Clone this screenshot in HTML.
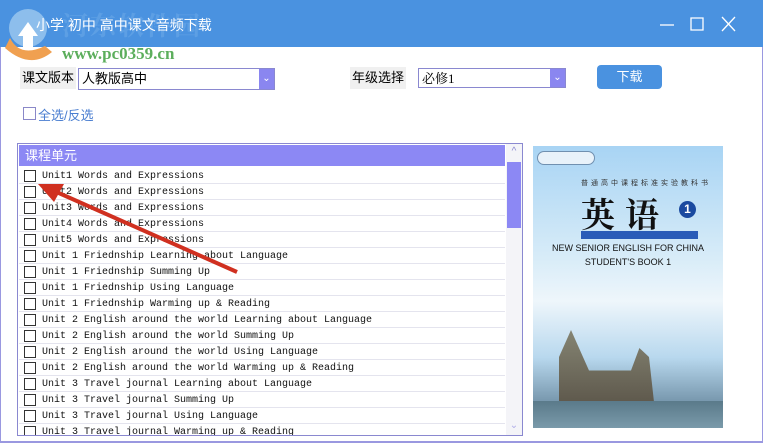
<!DOCTYPE html>
<html><head><meta charset="utf-8"><style>
*{margin:0;padding:0;box-sizing:border-box}
body{width:763px;height:443px;overflow:hidden;background:#fff;position:relative;font-family:"Liberation Sans","Noto Sans CJK SC",sans-serif}
.tb{position:absolute;left:0;top:0;width:763px;height:47px;background:#4a92e0}
.win{position:absolute;left:0;top:47px;width:763px;height:396px;border:1px solid #9a98e0;border-top:none;border-bottom:2px solid #9a98e0}
.abs{position:absolute}
.lbl{background:#f0f0f0;font-size:13px;color:#000;line-height:22px;padding:0 2px}
.sel{border:1px solid #8a88d0;background:#fff;font-size:13px;line-height:20px;padding-left:3px}
.sel .ar{position:absolute;right:0;top:0;width:15px;height:20px;background:#8a86f0;color:#fff;font-size:10px;text-align:center;line-height:20px}
.row{position:absolute;left:0;height:16px;width:486px;border-bottom:1px solid #e4e4ee;font-family:"Liberation Mono",monospace;font-size:10px;line-height:17px;white-space:pre;color:#111}
.row i{position:absolute;left:5px;top:2px;width:12px;height:12px;border:1px solid #333;background:#fff}
.row span{position:absolute;left:23px;top:0}
</style></head><body>
<div class="tb"></div>
<svg class="abs" style="left:0;top:8px" width="60" height="55"><circle cx="28" cy="20" r="19" fill="#9ec9ef" opacity=".8"/><path d="M10 30 Q20 50 45 38 L52 44 Q30 62 5 40Z" fill="#f0a050"/><path d="M18 28 L28 14 L38 28 L33 28 L33 40 L23 40 L23 28Z" fill="#fff"/></svg>
<div class="abs" style="left:62px;top:6px;font-size:26px;color:#6aa8e8;opacity:.6;font-weight:bold;font-family:'Noto Serif CJK SC',serif;letter-spacing:2px">河东软件园</div>
<div class="abs" style="left:36px;top:15px;font-size:14px;color:#fff">小学 初中 高中课文音频下载</div>
<div class="abs" style="left:62px;top:44px;font-size:17px;color:#5cae5c;font-weight:bold;font-family:'Liberation Serif',serif">www.pc0359.cn</div>
<svg class="abs" style="left:658px;top:14px" width="100" height="22" stroke="#fff" stroke-width="1.3" fill="none"><path d="M2 11H16"/><path d="M33 4H45V16H33Z"/><path d="M64 3L77 17M77 3L64 17"/></svg>
<div class="win"></div>
<div class="abs lbl" style="left:20px;top:67px">课文版本</div>
<div class="abs sel" style="left:78px;top:68px;width:197px;height:22px">人教版高中<div class="ar">⌄</div></div>
<div class="abs lbl" style="left:350px;top:67px">年级选择</div>
<div class="abs sel" style="left:418px;top:68px;width:148px;height:20px;font-family:'Liberation Serif','Noto Serif CJK SC',serif">必修1<div class="ar" style="height:18px;line-height:18px">⌄</div></div>
<div class="abs" style="left:597px;top:65px;width:65px;height:24px;background:#4a92e0;border-radius:4px;color:#fff;font-size:13px;text-align:center;line-height:24px">下载</div>
<div class="abs" style="left:23px;top:107px;width:13px;height:13px;border:1px solid #8a88c8"></div>
<div class="abs" style="left:38px;top:105px;font-size:13px;color:#4a7ed0">全选/反选</div>
<div class="abs" style="left:17px;top:143px;width:506px;height:293px;border:1px solid #8a88d0;overflow:hidden;background:#fff">
<div class="abs" style="left:1px;top:1px;width:486px;height:21px;background:#8c88f4;color:#fff;font-size:13px;line-height:21px;padding-left:6px">课程单元</div>
<div class="abs" style="left:488px;top:0;width:16px;height:291px;background:#f4f4f8"></div>
<div class="abs" style="left:489px;top:2px;width:14px;height:14px;color:#8a88d0;font-size:10px;text-align:center">^</div>
<div class="abs" style="left:489px;top:18px;width:14px;height:66px;background:#8c88f4"></div>
<div class="abs" style="left:489px;top:276px;width:14px;height:14px;color:#b0aee8;font-size:10px;text-align:center">⌄</div>
<div class="abs" style="left:1px;top:24px">
<div class="row" style="top:0"><i></i><span>Unit1 Words and Expressions</span></div>
<div class="row" style="top:16px"><i></i><span>Unit2 Words and Expressions</span></div>
<div class="row" style="top:32px"><i></i><span>Unit3 Words and Expressions</span></div>
<div class="row" style="top:48px"><i></i><span>Unit4 Words and Expressions</span></div>
<div class="row" style="top:64px"><i></i><span>Unit5 Words and Expressions</span></div>
<div class="row" style="top:80px"><i></i><span>Unit 1 Friednship Learning about Language</span></div>
<div class="row" style="top:96px"><i></i><span>Unit 1 Friednship Summing Up</span></div>
<div class="row" style="top:112px"><i></i><span>Unit 1 Friednship Using Language</span></div>
<div class="row" style="top:128px"><i></i><span>Unit 1 Friednship Warming up &amp; Reading</span></div>
<div class="row" style="top:144px"><i></i><span>Unit 2 English around the world Learning about Language</span></div>
<div class="row" style="top:160px"><i></i><span>Unit 2 English around the world Summing Up</span></div>
<div class="row" style="top:176px"><i></i><span>Unit 2 English around the world Using Language</span></div>
<div class="row" style="top:192px"><i></i><span>Unit 2 English around the world Warming up &amp; Reading</span></div>
<div class="row" style="top:208px"><i></i><span>Unit 3 Travel journal Learning about Language</span></div>
<div class="row" style="top:224px"><i></i><span>Unit 3 Travel journal Summing Up</span></div>
<div class="row" style="top:240px"><i></i><span>Unit 3 Travel journal Using Language</span></div>
<div class="row" style="top:256px"><i></i><span>Unit 3 Travel journal Warming up &amp; Reading</span></div>
</div></div>
<svg class="abs" style="left:30px;top:180px" width="220" height="100"><path d="M207 92 L22 10" stroke="#d03020" stroke-width="4"/><path d="M8 4 L34 4 L24 22Z" fill="#d03020"/></svg>
<div class="abs" style="left:533px;top:146px;width:190px;height:282px;background:linear-gradient(#a8d4f4,#d8ecf8 40%,#eef6fb 55%,#b8d8ee 75%,#7a9ab0 90%,#5a7080);overflow:hidden">
<div class="abs" style="left:4px;top:5px;width:58px;height:14px;border:1px solid #7090b0;border-radius:7px;background:#e8f2fa"></div>
<div class="abs" style="left:48px;top:32px;font-size:7px;color:#333;letter-spacing:3px">普通高中课程标准实验教科书</div>
<div class="abs" style="left:48px;top:42px;font-size:34px;color:#111;font-family:'Noto Serif CJK SC',serif;font-weight:bold;letter-spacing:10px">英语</div>
<div class="abs" style="left:146px;top:55px;width:17px;height:17px;border-radius:50%;background:#1a4aa0;color:#fff;font-size:12px;text-align:center;line-height:17px;font-weight:bold">1</div>
<div class="abs" style="left:48px;top:85px;width:117px;height:8px;background:#2a5cb8"></div>
<div class="abs" style="left:0;top:97px;width:190px;text-align:center;font-size:9px;color:#111">NEW SENIOR ENGLISH FOR CHINA</div>
<div class="abs" style="left:0;top:111px;width:190px;text-align:center;font-size:9px;color:#111">STUDENT'S BOOK 1</div>
<div class="abs" style="left:20px;top:175px;width:120px;height:90px;background:linear-gradient(#8a8a78,#5a5448);clip-path:polygon(5% 100%,5% 40%,15% 10%,25% 40%,30% 55%,65% 55%,72% 30%,80% 40%,85% 100%)"></div>
<div class="abs" style="left:0;top:255px;width:190px;height:27px;background:linear-gradient(#5a7a8a,#7a9aaa)"></div>
</div>
</body></html>
